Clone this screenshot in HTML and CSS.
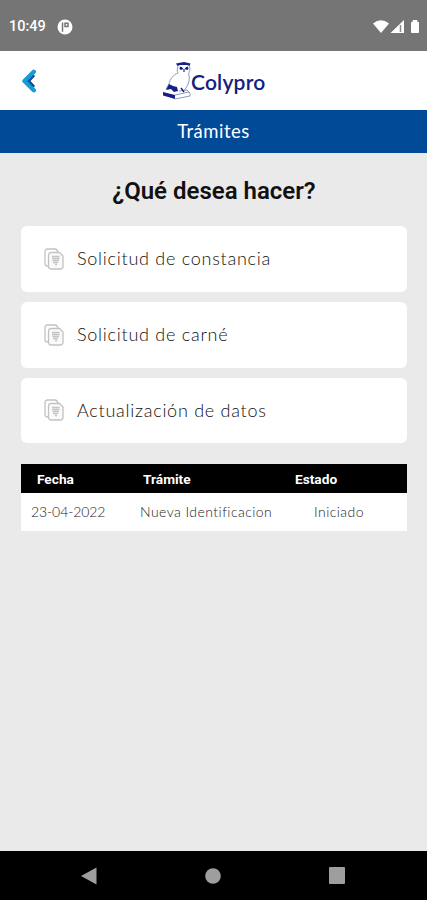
FILE: index.html
```
<!DOCTYPE html>
<html lang="es">
<head>
    <meta charset="UTF-8">
    <meta name="viewport" content="width=device-width, initial-scale=1.0">
    <title>Colypro - Trámites</title>
    <link rel="stylesheet" href="styles.css">
</head>
<body>
    <svg class="sprite" width="0" height="0">
        <symbol id="docs" viewBox="0 0 20 22">
            <path d="M4 18H3.500A2.500 2.500 0 0 1 1 15.500v-12A2.500 2.500 0 0 1 3.500 1H11q2 0 3 3" fill="none" stroke="#c2c2c2" stroke-width="1.300"/>
            <path d="M7 4.500h8.500L19 8v10.500a2.500 2.500 0 0 1-2.500 2.500H7a2.500 2.500 0 0 1-2.500-2.500V7A2.500 2.500 0 0 1 7 4.500z" fill="#fafafa" stroke="#c2c2c2" stroke-width="1.300"/>
            <path d="M8 8.500h7.500M8 10.500h7.500M8.500 12.500h6.500M9 14.500h5M11 16.500h2" fill="none" stroke="#c4c4c4" stroke-width="1.500"/>
        </symbol>
    </svg>

    <div class="status-bar">
        <div class="status-left">
            <span class="clock">10:49</span>
            <svg width="16" height="16" viewBox="0 0 16 16">
                <circle cx="8" cy="8" r="7.500" fill="#fff"/>
                <path d="M5.500 3.500v9.200M8 4.200h3v3.300H8z" fill="none" stroke="#757575" stroke-width="1.500"/>
            </svg>
        </div>
        <svg class="status-right" width="48" height="16" viewBox="0 0 48 16">
            <path d="M0 4.500Q8-2 16 4.500L8 14z" fill="#fff"/>
            <path d="M17.500 14L31 1v13z" fill="#fff"/>
            <path d="M27.500 6v7" stroke="#8a8a8a" stroke-width="1.500"/>
            <path d="M38.500 3.500h1.500v-2h4v2h1.500v10h-7z" fill="#fff" stroke="#fff" stroke-linejoin="round"/>
        </svg>
    </div>

    <div class="header">
        <button class="btn-back" aria-label="Volver">
            <svg width="16" height="24" viewBox="0 0 16 24">
                <path d="M13 6L7.500 12l5.500 6" fill="none" stroke="#123f83" stroke-width="3"/>
                <path d="M12.800 2.800L3.500 12l9.300 9.200" fill="none" stroke="#159bd7" stroke-width="4.400" stroke-linecap="round" stroke-linejoin="round"/>
                <path d="M12 7.500L7.800 12l3.200 4" fill="none" stroke="#0e5aa0" stroke-width="1.800"/>
            </svg>
        </button>
        <div class="logo">
            <svg width="30" height="40" viewBox="0 0 30 40">
                <g fill="none" stroke="#8d9ac2" stroke-width="1">
                    <path d="M16 5c-1 3-1 5 0 7-5 2-8 6-9 11l-3 5M27.500 5c1 3 0 6-1 8 2 5 0 11-4 16"/>
                    <path d="M17 30l8-1 3 3v3l-15 3M13 34l14-3"/>
                </g>
                <path d="M14 2.500L22 1l6.500 1.500-1 2.500-2.500-1h-7l-2.500 1z" fill="#14208a"/>
                <path d="M18 6l3 2M26 6l-3 2M22 8v3" stroke="#14208a" stroke-width="1.200"/>
                <circle cx="19" cy="7.500" r="1.400" fill="#14208a"/>
                <circle cx="25" cy="7.500" r="1.400" fill="#14208a"/>
                <path d="M7 23l4 2 4 1 1 4-4 1-3-3-5 1z" fill="#14208a"/>
                <path d="M1 31l12 3v4L1 34.500z" fill="#14208a"/>
                <path d="M19 27l3 4" stroke="#14208a" stroke-width="1.400"/>
            </svg>
            <span class="brand">Colypro</span>
        </div>
    </div>

    <div class="title-bar">Trámites</div>

    <div class="content">
        <h1 class="question">¿Qué desea hacer?</h1>

        <div class="options">
            <div class="option">
                <svg class="option-icon"><use href="#docs"/></svg>
                <span class="option-text">Solicitud de constancia</span>
            </div>
            <div class="option">
                <svg class="option-icon"><use href="#docs"/></svg>
                <span class="option-text">Solicitud de carné</span>
            </div>
            <div class="option">
                <svg class="option-icon"><use href="#docs"/></svg>
                <span class="option-text">Actualización de datos</span>
            </div>
        </div>

        <div class="table">
            <div class="row row-head">
                <span>Fecha</span>
                <span>Trámite</span>
                <span>Estado</span>
            </div>
            <div class="row row-body">
                <span class="date">23-04-2022</span>
                <span>Nueva Identificacion</span>
                <span>Iniciado</span>
            </div>
        </div>
    </div>

    <div class="nav-bar">
        <svg width="16" height="18" viewBox="0 0 16 18"><path d="M0 9L15.500.5v17z" fill="#9e9e9e"/></svg>
        <svg width="16" height="16" viewBox="0 0 16 16"><circle cx="8" cy="8" r="7.800" fill="#9e9e9e"/></svg>
        <svg width="16" height="17" viewBox="0 0 16 17"><rect width="16" height="17" rx="1" fill="#9e9e9e"/></svg>
    </div>
</body>
</html>
```
FILE: styles.css
```
* {
    margin: 0;
    padding: 0;
    box-sizing: border-box;
}

body {
    background: #eaeaea;
    font-family: Lato, "Liberation Sans", sans-serif;
    height: 900px;
    display: flex;
    flex-direction: column;
    overflow: hidden;
}

.sprite {
    position: absolute;
}

.status-bar {
    height: 51px;
    background: #757575;
    display: flex;
    justify-content: space-between;
    align-items: center;
    padding: 2px 6px 0 9px;
}

.status-left {
    display: flex;
    align-items: center;
    gap: 11px;
}

.clock {
    color: #fff;
    font-family: Roboto, sans-serif;
    font-size: 14.5px;
    font-weight: 500;
}

.header {
    height: 59px;
    background: #fff;
    display: flex;
    align-items: center;
    padding-left: 21px;
}

.btn-back {
    width: 16px;
    height: 24px;
    border: none;
    background: none;
}

.logo {
    display: flex;
    align-items: center;
    margin-left: 125px;
}

.brand {
    color: #14207c;
    font-size: 21px;
    font-weight: 600;
    letter-spacing: 0.2px;
    padding-top: 1px;
    margin-left: -1px;
}

.title-bar {
    height: 43px;
    background: #004a98;
    color: #fff;
    font-size: 18.5px;
    letter-spacing: 0.5px;
    display: flex;
    align-items: center;
    justify-content: center;
    padding-bottom: 2px;
}

.content {
    flex: 1;
    padding: 22px 20px 0 21px;
}

.question {
    color: #111;
    font-family: Roboto, sans-serif;
    font-size: 24px;
    font-weight: 600;
    line-height: 32px;
    text-align: center;
    margin-bottom: 19px;
}

.options {
    display: flex;
    flex-direction: column;
    gap: 10px;
}

.option {
    height: 65.8px;
    background: #fff;
    border-radius: 6px;
    display: flex;
    align-items: center;
    padding-left: 23px;
    gap: 13px;
}

.option-icon {
    width: 20px;
    height: 22px;
}

.option-text {
    color: #111;
    font-size: 18px;
    font-weight: 300;
    letter-spacing: 0.74px;
    padding-bottom: 1px;
}

.table {
    margin-top: 20.6px;
}

.row {
    display: grid;
    align-items: center;
}

.row-head {
    height: 29px;
    background: #000;
    color: #fff;
    font-family: Roboto, sans-serif;
    font-size: 13.7px;
    font-weight: 700;
    grid-template-columns: 106px 152px 1fr;
    padding: 1px 0 0 16px;
}

.row-body {
    height: 38px;
    background: #fff;
    color: #222;
    font-size: 14px;
    font-weight: 300;
    letter-spacing: 0.45px;
    grid-template-columns: 109px 174px 1fr;
    padding-left: 10px;
}

.date {
    letter-spacing: -0.1px;
}

.nav-bar {
    height: 49px;
    background: #000;
    display: flex;
    align-items: center;
    justify-content: space-between;
    padding: 0 82px 0 81px;
}
```
